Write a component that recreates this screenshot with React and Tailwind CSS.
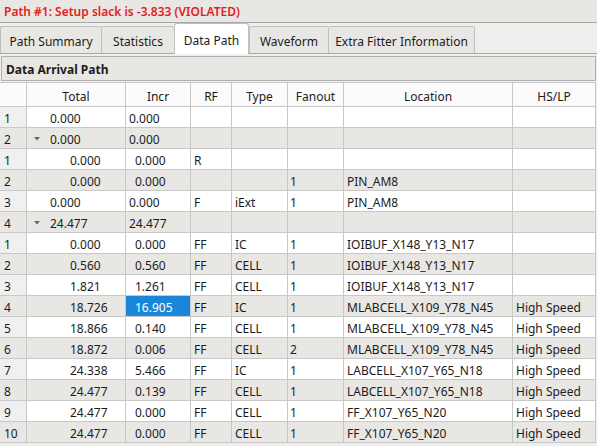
import React from "react";

const tabs = [
  { label: "Path Summary", w: "w-[101px]" },
  { label: "Statistics", w: "w-[73px]" },
  { label: "Data Path", w: "w-[75px]", active: true },
  { label: "Waveform", w: "w-[79px]" },
  { label: "Extra Fitter Information", w: "w-[147px]" },
];

const headers = ["", "Total", "Incr", "RF", "Type", "Fanout", "Location", "HS/LP"];

const rows = [
  { n: "1", lvl: 0, total: "0.000", incr: "0.000" },
  { n: "2", lvl: 0, open: true, total: "0.000", incr: "0.000" },
  { n: "1", lvl: 1, total: "0.000", incr: "0.000", rf: "R" },
  { n: "2", lvl: 1, total: "0.000", incr: "0.000", fanout: "1", loc: "PIN_AM8" },
  { n: "3", lvl: 0, total: "0.000", incr: "0.000", rf: "F", type: "iExt", fanout: "1", loc: "PIN_AM8" },
  { n: "4", lvl: 0, open: true, total: "24.477", incr: "24.477" },
  { n: "1", lvl: 1, total: "0.000", incr: "0.000", rf: "FF", type: "IC", fanout: "1", loc: "IOIBUF_X148_Y13_N17" },
  { n: "2", lvl: 1, total: "0.560", incr: "0.560", rf: "FF", type: "CELL", fanout: "1", loc: "IOIBUF_X148_Y13_N17" },
  { n: "3", lvl: 1, total: "1.821", incr: "1.261", rf: "FF", type: "CELL", fanout: "1", loc: "IOIBUF_X148_Y13_N17" },
  { n: "4", lvl: 1, total: "18.726", incr: "16.905", rf: "FF", type: "IC", fanout: "1", loc: "MLABCELL_X109_Y78_N45", hs: "High Speed", sel: true },
  { n: "5", lvl: 1, total: "18.866", incr: "0.140", rf: "FF", type: "CELL", fanout: "1", loc: "MLABCELL_X109_Y78_N45", hs: "High Speed" },
  { n: "6", lvl: 1, total: "18.872", incr: "0.006", rf: "FF", type: "CELL", fanout: "2", loc: "MLABCELL_X109_Y78_N45", hs: "High Speed" },
  { n: "7", lvl: 1, total: "24.338", incr: "5.466", rf: "FF", type: "IC", fanout: "1", loc: "LABCELL_X107_Y65_N18", hs: "High Speed" },
  { n: "8", lvl: 1, total: "24.477", incr: "0.139", rf: "FF", type: "CELL", fanout: "1", loc: "LABCELL_X107_Y65_N18", hs: "High Speed" },
  { n: "9", lvl: 1, total: "24.477", incr: "0.000", rf: "FF", type: "CELL", fanout: "1", loc: "FF_X107_Y65_N20", hs: "High Speed" },
  { n: "10", lvl: 1, total: "24.477", incr: "0.000", rf: "FF", type: "CELL", fanout: "1", loc: "FF_X107_Y65_N20", hs: "High Speed" },
];

const grid = "grid grid-cols-[27px_99px_65px_41px_56px_56px_169px_83px]";

function Cell({ className = "", children }) {
  return (
    <div className={"h-[21px] pt-[3px] border-r border-b border-[#c8c8c8] flex items-center whitespace-nowrap overflow-hidden " + className}>
      {children}
    </div>
  );
}

export default function App() {
  return (
    <div className="w-[597px] h-[446px] overflow-hidden bg-[#efeeec] text-[12px] text-[#1c1c1c] font-['Noto_Sans',sans-serif]">
      <div className="h-[23px] flex items-center px-[4px] pt-[1px] bg-[#e8e7e4] border-b border-[#a8a8a8] text-[12px] font-semibold text-[#e3211c]">
        Path #1: Setup slack is -3.833 (VIOLATED)
      </div>

      <div className="h-[31px] flex items-end border-b border-[#a8a8a8] bg-[#efeeec]">
        {tabs.map((t) =>
          t.active ? (
            <div
              key={t.label}
              className={t.w + " h-[31px] -mb-[1px] pt-[3px] flex items-center justify-center bg-white border border-b-0 border-[#c0c0c0] rounded-t-[3px]"}
            >
              {t.label}
            </div>
          ) : (
            <div
              key={t.label}
              className={t.w + " h-[27px] pt-[3px] flex items-center justify-center bg-[#e8e7e4] border border-b-0 border-r-0 last:border-r border-[#c0c0c0] rounded-t-[2px]"}
            >
              {t.label}
            </div>
          )
        )}
      </div>

      <div className="mt-[2px] mx-[1px] h-[25px] pt-[2px] border border-[#b0b0b0] bg-[#e8e7e4] flex items-center px-[4px] font-bold">
        Data Arrival Path
      </div>

      <div className="mt-[1px] border-t border-[#c8c8c8] w-[596px]">
        <div className={grid + " bg-[#fbfbfb]"}>
          {headers.map((h, i) => (
            <div key={i} className="h-[24px] pt-[4px] border-r border-b border-[#c8c8c8] flex items-center justify-center">
              {h}
            </div>
          ))}
        </div>

        {rows.map((r, i) => {
          const gray = i % 2 === 1;
          const bg = gray ? "bg-[#e8e7e4]" : "bg-white";
          return (
            <div key={i} className={grid + " " + bg}>
              <Cell className={(gray ? "bg-[#e8e7e4]" : "bg-[#f0f0f0]") + " pl-[4px]"}>{r.n}</Cell>
              <Cell className={r.lvl === 0 ? "pl-[23px] relative" : "pl-[43px]"}>
                {r.open && (
                  <svg className="absolute left-[7px] top-[9px]" width="6" height="4" viewBox="0 0 6 4">
                    <path d="M0 0 L6 0 L3 3.5 Z" fill="#666666" />
                  </svg>
                )}
                {r.total}
              </Cell>
              <Cell className={(r.sel ? "bg-[#1a86d9] text-white " : "") + (r.lvl === 0 ? "pl-[3px]" : "pl-[9px]")}>
                {r.incr}
              </Cell>
              <Cell className="pl-[3px]">{r.rf}</Cell>
              <Cell className="pl-[3px]">{r.type}</Cell>
              <Cell className="pl-[2px]">{r.fanout}</Cell>
              <Cell className="pl-[3px]">{r.loc}</Cell>
              <Cell className="pl-[3px]">{r.hs}</Cell>
            </div>
          );
        })}
      </div>
    </div>
  );
}
